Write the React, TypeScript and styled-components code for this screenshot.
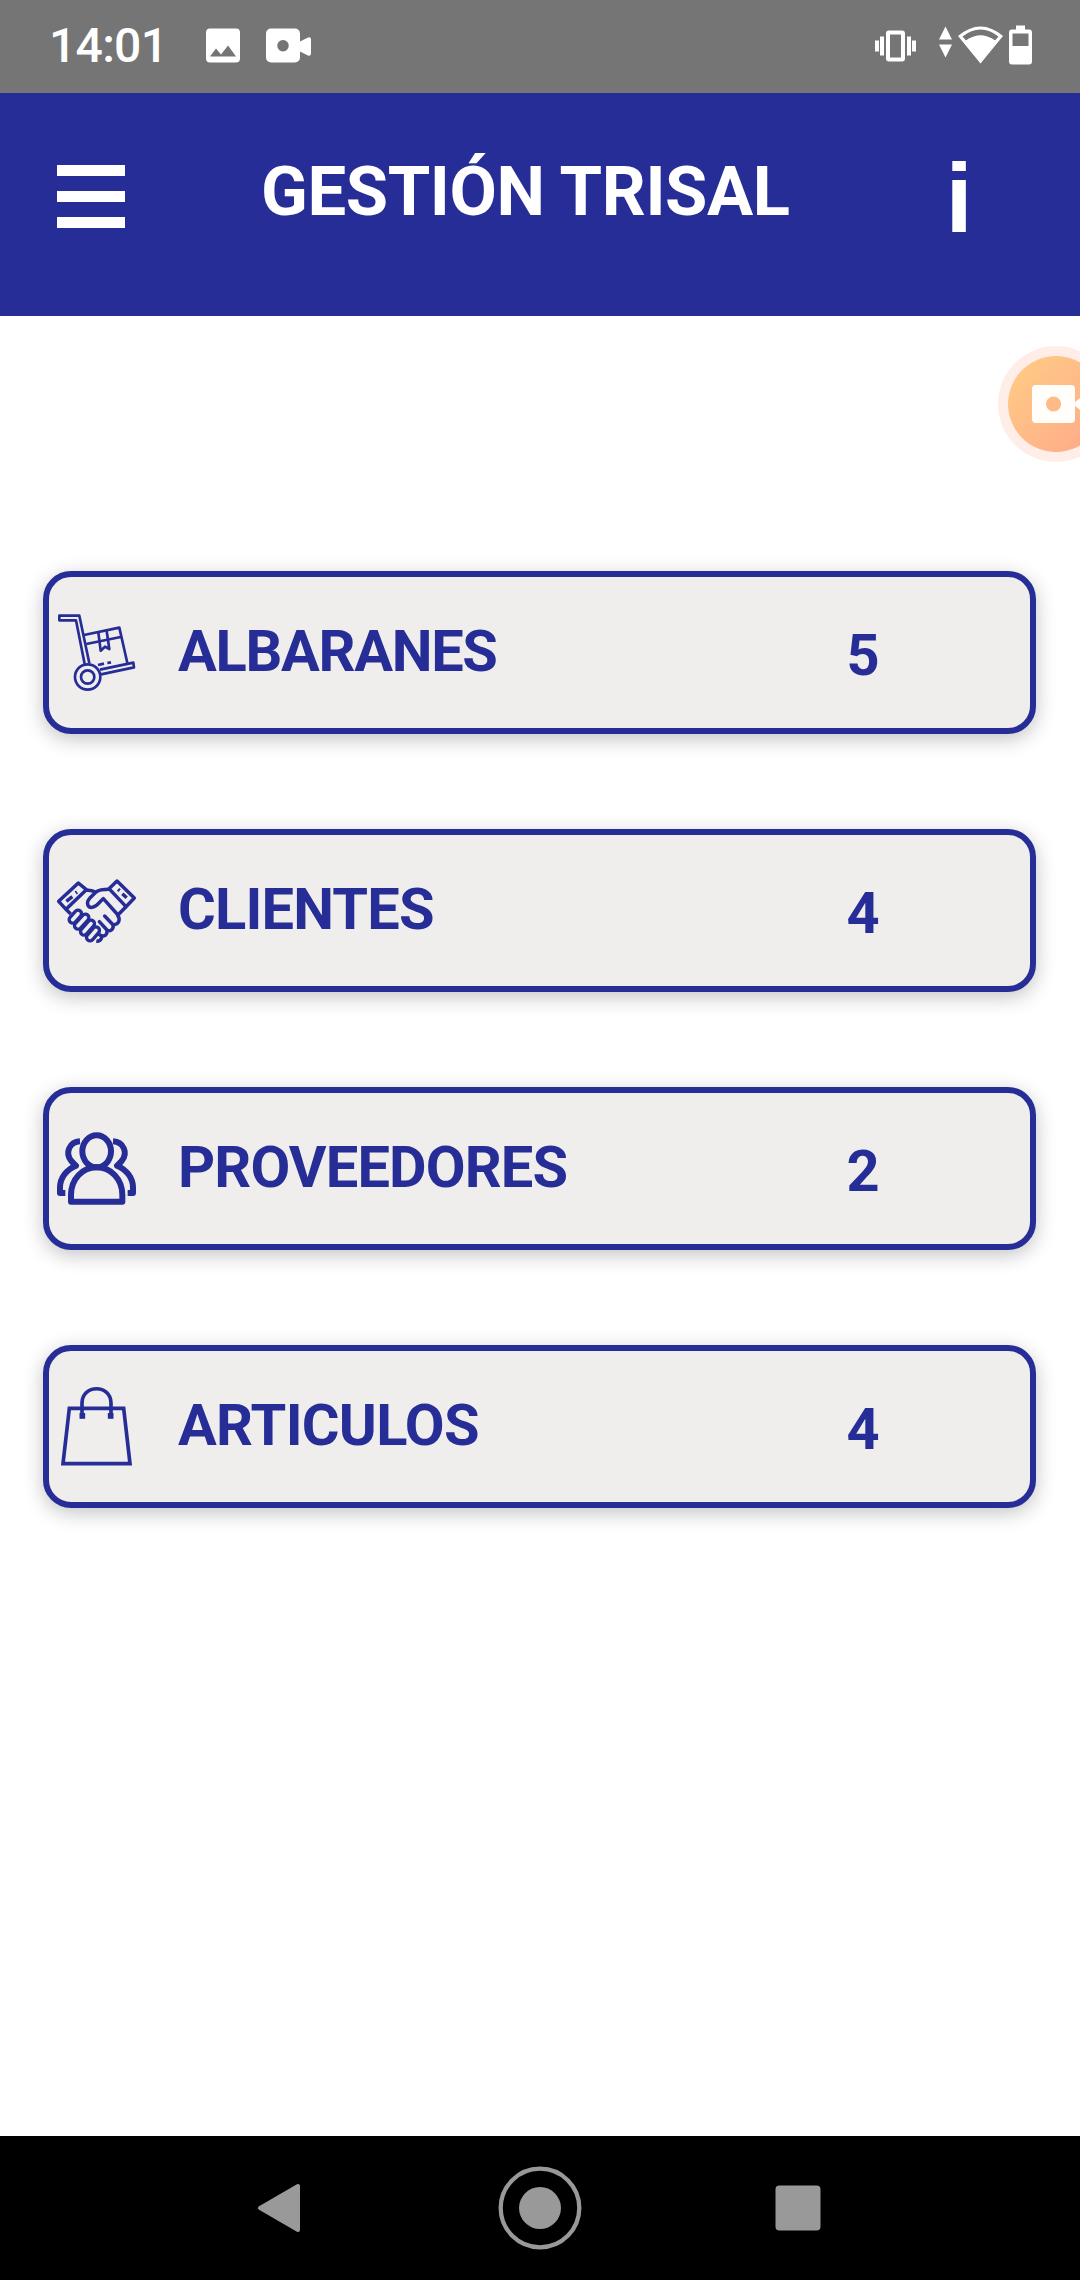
import React from "react";
import styled, { createGlobalStyle } from "styled-components";

const BLUE = "#262d96";
const PANEL = "#f0eeed";

const GlobalStyle = createGlobalStyle`
  *, *::before, *::after { box-sizing: border-box; }
  html, body { margin: 0; padding: 0; background: #fff; }
  body { font-family: Roboto, "Liberation Sans", sans-serif; overflow: hidden; }
  svg { display: block; }
`;

const Screen = styled.div`
  position: relative;
  display: flex;
  flex-direction: column;
  width: 1080px;
  height: 2280px;
  background: #fff;
  overflow: hidden;
`;

const StatusBar = styled.header`
  flex: none;
  display: flex;
  align-items: center;
  justify-content: space-between;
  height: 93px;
  padding: 0 47px 0 49px;
  background: #757575;
`;

const StatusGroup = styled.div`
  display: flex;
  align-items: center;
`;

const Clock = styled.span`
  width: 157px;
  padding-bottom: 1px;
  font-size: 48px;
  line-height: 56px;
  font-weight: 500;
  letter-spacing: -0.7px;
  color: #fff;
`;

const AppBar = styled.div`
  flex: none;
  display: flex;
  align-items: flex-start;
  height: 223px;
  padding: 0 107px 0 57px;
  background: ${BLUE};
  color: #fff;
`;

const MenuButton = styled.button`
  display: flex;
  flex-direction: column;
  gap: 15px;
  width: 68px;
  margin-top: 72px;
  padding: 0;
  border: 0;
  background: none;
`;

const MenuBar = styled.span`
  height: 11px;
  background: #fff;
`;

const Title = styled.h1`
  flex: 1;
  margin: 59px 0 0 136px;
  font-size: 68.75px;
  line-height: 80px;
  font-weight: 700;
  letter-spacing: -0.4px;
  white-space: nowrap;
`;

const InfoButton = styled.button`
  width: 28px;
  margin-top: 49px;
  padding: 0;
  border: 0;
  background: none;
  color: #fff;
  font-family: "Liberation Sans", Arial, sans-serif;
  font-size: 98px;
  line-height: 112px;
  font-weight: 700;
`;

const Content = styled.main`
  flex: 1;
  display: flex;
  flex-direction: column;
  gap: 95px;
  padding: 255px 44px 0 43px;
`;

const Card = styled.section`
  display: flex;
  align-items: center;
  height: 163px;
  padding: 0 134px 0 8px;
  border: 6px solid ${BLUE};
  border-radius: 28px;
  background: ${PANEL};
  box-shadow: 0 5px 20px rgba(0, 0, 0, 0.24);
  color: ${BLUE};
`;

const CardLabel = styled.span<{ $tracking: number }>`
  flex: 1;
  margin: -4px 0 0 42px;
  font-size: 57.75px;
  line-height: 68px;
  font-weight: 700;
  letter-spacing: ${({ $tracking }) => $tracking}px;
`;

const CardCount = styled.span`
  width: 66px;
  margin-top: 4px;
  font-size: 57.75px;
  line-height: 68px;
  font-weight: 700;
  text-align: center;
`;

const NavBar = styled.nav`
  flex: none;
  display: flex;
  align-items: center;
  justify-content: space-between;
  height: 144px;
  padding: 0 259px 0 257px;
  background: #000;
`;

const RecorderBubble = styled.div`
  position: absolute;
  top: 346px;
  left: 998px;
`;

type IconProps = { top: number; width: number; children: React.ReactNode };

const CardIcon = ({ top, width, children }: IconProps) => (
  <svg
    width="79"
    height="79"
    viewBox={`81 ${top} 237 237`}
    fill="none"
    stroke={BLUE}
    strokeWidth={width}
    strokeLinejoin="round"
    overflow="visible"
  >
    {children}
  </svg>
);

const HandTruck = () => (
  <CardIcon top={159} width={8}>
    <path d="M164 312 L138 181 H88 V167 H148 L178 310" />
    <path d="M162 225 L268 203 L292 309 M169 252 L272 231" />
    <path d="M205 217 L212 272 L225 260 L238 267 L230 213" />
    <path d="M210 329 L310 308 L312 322 L213 343" />
    <path d="M204 315 L222 311 M232 309 L243 307" />
    <circle cx="173" cy="351" r="38" />
    <circle cx="173" cy="351" r="20" />
  </CardIcon>
);

const fingers = [
  "M128 299 L144 281",
  "M144 317 L166 293",
  "M162 335 L183 311",
  "M180 352 L198 331",
];

const Handshake = () => (
  <CardIcon top={153} width={10.5}>
    <path d="M86 244 L145 189 L169 209 L108 268 Z" />
    <path d="M261 183 L313 234 L288 260 L237 206 Z" />
    <path d="M109 244 L127 230 M137 219 L141 216 M264 208 L269 212 M277 221 L290 233" />
    <path d="M169 211 Q182 209 196 216 M108 268 L122 282" />
    <path d="M238 208 Q209 208 198 216 L179 235 C167 248 173 264 187 262 C202 261 205 248 220 236 L264 285" />
    <path d="M288 260 L263 286 C272 298 267 315 249 314 C252 326 244 334 231 332 C232 344 225 350 215 347 C216 358 209 365 199 363" />
    <path d="M224 288 L249 314 M208 305 L231 330 M198 341 Q207 341 215 348" strokeLinecap="round" />
    {fingers.map((d) => (
      <g key={d} strokeLinecap="round">
        <path d={d} strokeWidth="31" />
        <path d={d} strokeWidth="11" stroke={PANEL} />
      </g>
    ))}
  </CardIcon>
);

const People = () => (
  <CardIcon top={147} width={18}>
    <ellipse cx="200" cy="214" rx="43" ry="48" />
    <path d="M123 365 V345 C123 298 157 262 200 262 C243 262 277 298 277 345 V365 Z" />
    <path d="M150 184 C118 186 104 219 124 243 Q130 250 138 257 C109 269 90 294 90 323 V339 H106" />
    <path d="M249 184 C281 186 295 219 275 243 Q269 250 261 257 C290 269 309 294 309 323 V339 H293" />
  </CardIcon>
);

const Bag = () => (
  <CardIcon top={156} width={11}>
    <path d="M118 220 H281 L300 386 H99 Z" strokeLinejoin="miter" />
    <path d="M156 250 V204 C156 147 243 147 243 204 V250" />
    <path d="M157 234 V251 M242 234 V251" strokeWidth="17" />
  </CardIcon>
);

const entries = [
  { label: "ALBARANES", count: 5, tracking: -1.3, Icon: HandTruck },
  { label: "CLIENTES", count: 4, tracking: -0.8, Icon: Handshake },
  { label: "PROVEEDORES", count: 2, tracking: -0.85, Icon: People },
  { label: "ARTICULOS", count: 4, tracking: -0.75, Icon: Bag },
];

export default function App() {
  return (
    <Screen>
      <GlobalStyle />
      <StatusBar>
        <StatusGroup>
          <Clock>14:01</Clock>
          <svg width="106" height="36" viewBox="206 28.5 106 36" fill="#fff" overflow="visible">
            <path
              fillRule="evenodd"
              d="M210 28h26a4 4 0 0 1 4 4v26a4 4 0 0 1-4 4h-26a4 4 0 0 1-4-4V32a4 4 0 0 1 4-4zM210 56h26l-8-11-7 9-5-6z"
            />
            <path
              fillRule="evenodd"
              d="M271 28h24a5 5 0 0 1 5 5v8l8-4q3-1 3 2v13q0 4-3 3l-8-4v6a5 5 0 0 1-5 5h-24a5 5 0 0 1-5-5V33a5 5 0 0 1 5-5zM283 39.500a5.700 5.700 0 1 0 .01 0z"
            />
          </svg>
        </StatusGroup>
        <svg width="158" height="40" viewBox="875 26.5 158 40" fill="#fff" overflow="visible">
          <path d="M875 40h4v11h-4zM880 36h4v19h-4zM907 36h4v19h-4zM912 40h4v11h-4z" />
          <rect x="888" y="32" width="15" height="27" rx="1" fill="none" stroke="#fff" strokeWidth="4" />
          <path d="M939 39l6.500-13 6.500 13zM939 44h13l-6.500 13z" />
          <path d="M965.500 40.500Q980.500 29.500 995.500 40.500L980.500 62.700z" />
          <path
            fillRule="evenodd"
            d="M958 35.500Q980.500 16.500 1003 35.500L980.500 63zM962.500 36Q980.500 22 998.500 36L995 40Q980.500 30 966 40z"
          />
          <path
            fillRule="evenodd"
            d="M1016 25h9v4h4q3 0 3 3v29q0 3-3 3h-17q-3 0-3-3V32q0-3 3-3h4zM1012.500 33v12.500h16V33z"
          />
        </svg>
      </StatusBar>
      <AppBar>
        <MenuButton aria-label="Menu">
          <MenuBar />
          <MenuBar />
          <MenuBar />
        </MenuButton>
        <Title>GESTIÓN TRISAL</Title>
        <InfoButton>i</InfoButton>
      </AppBar>
      <Content>
        {entries.map(({ label, count, tracking, Icon }) => (
          <Card key={label}>
            <Icon />
            <CardLabel $tracking={tracking}>{label}</CardLabel>
            <CardCount>{count}</CardCount>
          </Card>
        ))}
      </Content>
      <NavBar>
        <svg width="48" height="50" viewBox="257 2183 48 50">
          <path d="M260 2208L298 2186V2230z" fill="#999" stroke="#999" strokeWidth="4" strokeLinejoin="round" />
        </svg>
        <svg width="84" height="84" viewBox="0 0 84 84">
          <circle cx="42" cy="42" r="39.300" fill="none" stroke="#999" strokeWidth="4.300" />
          <circle cx="42" cy="42" r="21" fill="#999" />
        </svg>
        <svg width="46" height="46" viewBox="0 0 46 46">
          <rect x=".5" y=".5" width="45" height="45" rx="4" fill="#999" />
        </svg>
      </NavBar>
      <RecorderBubble>
        <svg width="82" height="116" viewBox="0 0 82 116">
          <defs>
            <linearGradient id="bubble" x1="0" y1="0" x2="1" y2="1">
              <stop offset="0.1" stopColor="#ffca86" />
              <stop offset="0.9" stopColor="#ffab88" />
            </linearGradient>
          </defs>
          <circle cx="58" cy="58" r="58" fill="#ffeee7" />
          <circle cx="58" cy="58" r="48" fill="url(#bubble)" />
          <path
            fill="#fffefa"
            fillRule="evenodd"
            d="M38 39h35a4 4 0 0 1 4 4v13l8-6v16l-8-6v13a4 4 0 0 1-4 4H38a4 4 0 0 1-4-4V43a4 4 0 0 1 4-4zM55.500 50.500a7.500 7.500 0 1 0 .01 0z"
          />
        </svg>
      </RecorderBubble>
    </Screen>
  );
}
